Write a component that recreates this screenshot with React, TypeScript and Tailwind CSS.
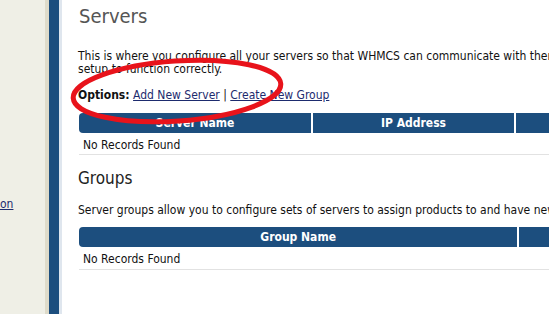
const font = { fontFamily: '"DejaVu Sans Condensed", "DejaVu Sans", sans-serif' };

function HeaderRow({ cols }: { cols: { label: string; w: string }[] }) {
  return (
    <div className="flex gap-[2px]">
      {cols.map((c, i) => (
        <div
          key={i}
          className={`${c.w} h-[20px] bg-[#1c4e7e] text-white font-bold text-[12px] flex items-center justify-center ${
            i === 0 ? 'rounded-l-[4px]' : ''
          }`}
        >
          {c.label}
        </div>
      ))}
    </div>
  );
}

function EmptyRow() {
  return (
    <div className="h-[22px] border-b border-[#e2e2e2] pl-[4px] pt-[2px] flex items-center text-[12px] text-[#111]">
      No Records Found
    </div>
  );
}

export default function App() {
  return (
    <div className="w-[549px] h-[314px] overflow-hidden flex bg-white" style={font}>
      {/* sidebar */}
      <div className="w-[45px] shrink-0 bg-[#efefe6] relative">
        <a className="absolute left-0 top-[195px] text-[12px] text-[#1d2b6e] underline">on</a>
      </div>
      <div className="w-[4px] shrink-0 bg-[#dedbca]" />
      <div className="w-[10px] shrink-0 bg-[#1c4e7e]" />
      <div className="w-[3px] shrink-0 bg-[#dfe6ee]" />

      {/* content */}
      <div className="relative shrink-0 w-[700px] pl-[16px] pt-[4px]">
        <h1 className="text-[20px] text-[#555] leading-[24px] ml-[1px]">Servers</h1>
        <p className="mt-[22px] text-[12px] leading-[13px] text-[#111] whitespace-nowrap">
          This is where you configure all your servers so that WHMCS can communicate with them and
          <br />
          setup to function correctly.
        </p>
        <div className="mt-[12px] text-[12px] leading-[14px] text-[#111]">
          <b>Options:</b>{' '}
          <a className="text-[#1d2b6e] underline">Add New Server</a> |{' '}
          <a className="text-[#1d2b6e] underline">Create New Group</a>
        </div>
        <div className="mt-[11px] ml-[1px] w-[620px]">
          <HeaderRow
            cols={[
              { label: 'Server Name', w: 'w-[232px]' },
              { label: 'IP Address', w: 'w-[201px]' },
              { label: 'Status', w: 'w-[180px]' },
            ]}
          />
          <EmptyRow />
        </div>

        <h2 className="mt-[12px] text-[17px] leading-[22px] text-[#222]">Groups</h2>
        <p className="mt-[15px] text-[12px] leading-[13px] text-[#111] whitespace-nowrap">
          Server groups allow you to configure sets of servers to assign products to and have new
          accounts distributed
        </p>
        <div className="mt-[10px] ml-[1px] w-[620px]">
          <HeaderRow
            cols={[
              { label: 'Group Name', w: 'w-[439px]' },
              { label: 'Servers', w: 'w-[180px]' },
            ]}
          />
          <div className="h-[23px] border-b border-[#e2e2e2] pl-[4px] pt-[2px] flex items-center text-[12px] text-[#111]">
            No Records Found
          </div>
        </div>
      </div>

      {/* red annotation */}
      <svg className="absolute left-0 top-0 pointer-events-none" width="549" height="314">
        <ellipse
          cx="177"
          cy="91"
          rx="104"
          ry="30"
          transform="rotate(-4 177 91)"
          fill="none"
          stroke="#e8131b"
          strokeWidth="5"
        />
      </svg>
    </div>
  );
}
